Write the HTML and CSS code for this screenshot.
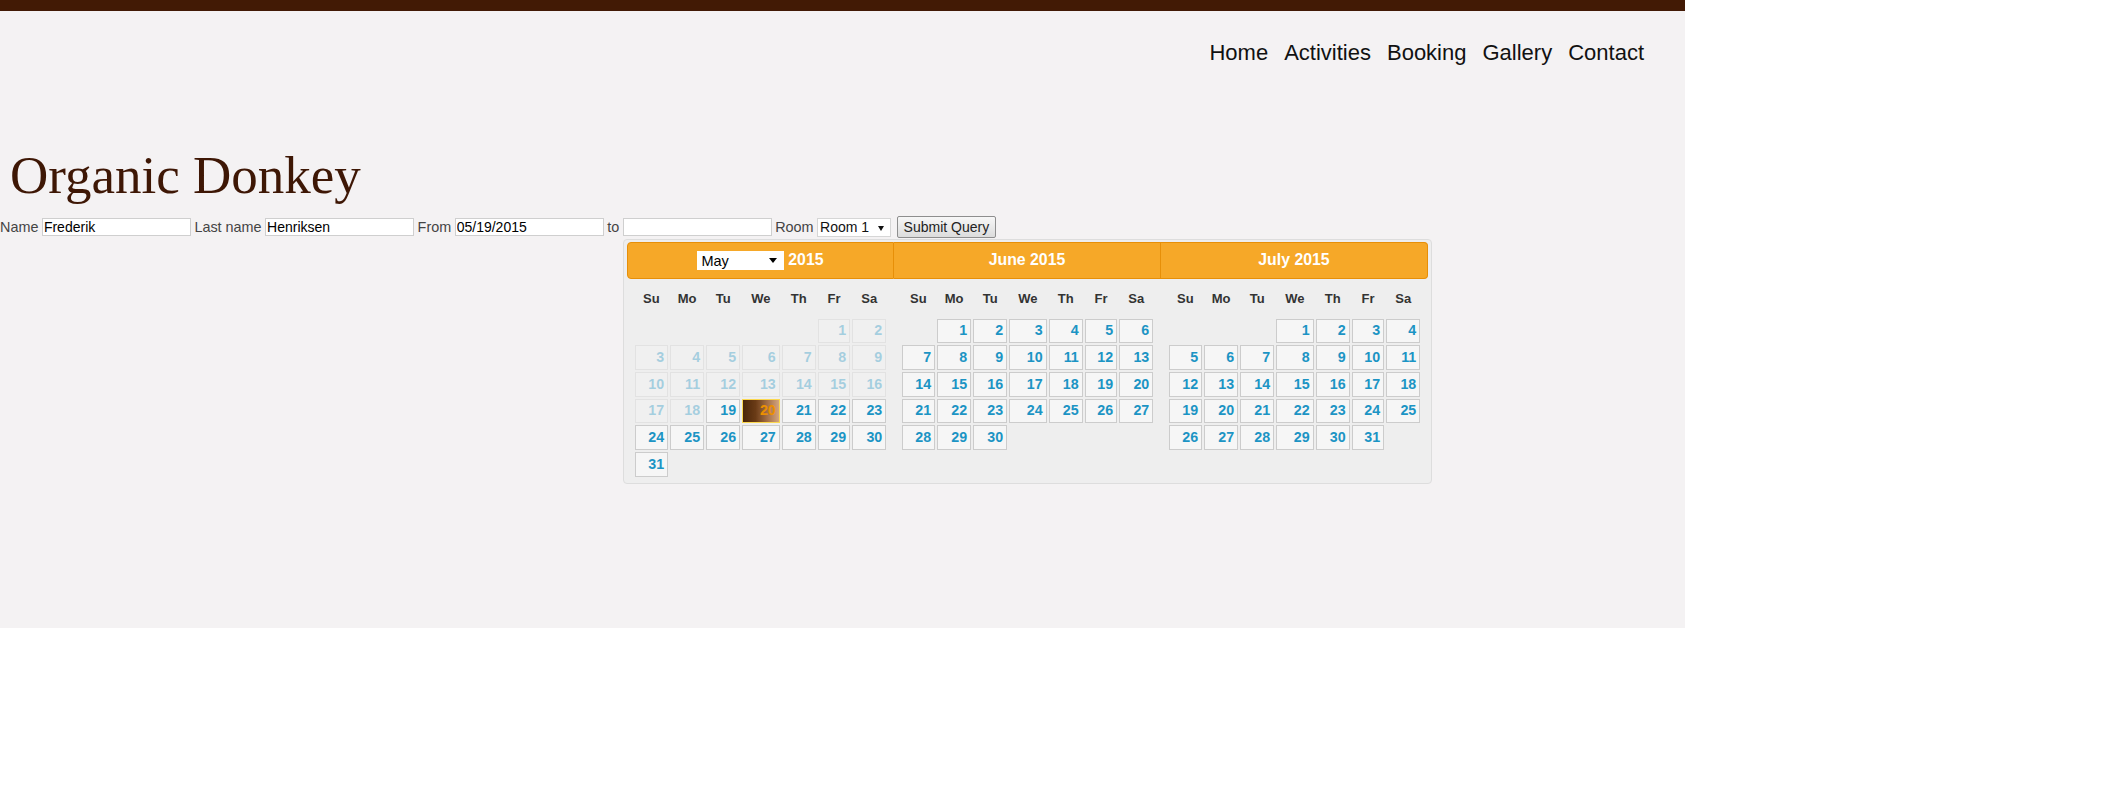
FILE: index.html
```html
<!DOCTYPE html>
<html lang="en">
<head>
<meta charset="utf-8">
<title>Organic Donkey - Booking</title>
<link rel="stylesheet" href="styles.css">
</head>
<body>
<div class="page">
  <div class="topbar"></div>
  <nav class="nav">
    <a href="#">Home</a>
    <a href="#">Activities</a>
    <a href="#">Booking</a>
    <a href="#">Gallery</a>
    <a href="#">Contact</a>
  </nav>
  <h1 class="title">Organic Donkey</h1>
  <form class="form">
    <span class="lbl">Name</span>
    <input class="field" type="text" value="Frederik">
    <span class="lbl">Last name</span>
    <input class="field" type="text" value="Henriksen">
    <span class="lbl">From</span>
    <input class="field" type="text" value="05/19/2015">
    <span class="lbl">to</span>
    <input class="field" type="text" value="">
    <span class="lbl">Room</span>
    <span class="room"><select class="room-sel"><option>Room 1</option><option>Room 2</option></select></span>
    <button class="submit" type="button">Submit Query</button>
  </form>

  <div class="dp">
    <div class="dp-groups">
      <div class="grp grp-first">
        <div class="hd"><div class="ttl"><span class="msel"><select><option>Jan</option><option>Feb</option><option>Mar</option><option>Apr</option><option selected>May</option><option>Jun</option><option>Jul</option><option>Aug</option><option>Sep</option><option>Oct</option><option>Nov</option><option>Dec</option></select></span>2015</div></div>
        <table>
          <colgroup><col class="c1"><col class="c2"><col class="c3"><col class="c4"><col class="c5"><col class="c6"><col class="c7"></colgroup>
          <thead><tr><th>Su</th><th>Mo</th><th>Tu</th><th>We</th><th>Th</th><th>Fr</th><th>Sa</th></tr></thead>
          <tbody>
            <tr><td></td><td></td><td></td><td></td><td></td><td class="off"><span class="d">1</span></td><td class="off"><span class="d">2</span></td></tr>
            <tr><td class="off"><span class="d">3</span></td><td class="off"><span class="d">4</span></td><td class="off"><span class="d">5</span></td><td class="off"><span class="d">6</span></td><td class="off"><span class="d">7</span></td><td class="off"><span class="d">8</span></td><td class="off"><span class="d">9</span></td></tr>
            <tr><td class="off"><span class="d">10</span></td><td class="off"><span class="d">11</span></td><td class="off"><span class="d">12</span></td><td class="off"><span class="d">13</span></td><td class="off"><span class="d">14</span></td><td class="off"><span class="d">15</span></td><td class="off"><span class="d">16</span></td></tr>
            <tr><td class="off"><span class="d">17</span></td><td class="off"><span class="d">18</span></td><td><a class="d" href="#">19</a></td><td><a class="d sel" href="#">20</a></td><td><a class="d" href="#">21</a></td><td><a class="d" href="#">22</a></td><td><a class="d" href="#">23</a></td></tr>
            <tr><td><a class="d" href="#">24</a></td><td><a class="d" href="#">25</a></td><td><a class="d" href="#">26</a></td><td><a class="d" href="#">27</a></td><td><a class="d" href="#">28</a></td><td><a class="d" href="#">29</a></td><td><a class="d" href="#">30</a></td></tr>
            <tr><td><a class="d" href="#">31</a></td><td></td><td></td><td></td><td></td><td></td><td></td></tr>
          </tbody>
        </table>
      </div>
      <div class="grp grp-mid">
        <div class="hd"><div class="ttl">June 2015</div></div>
        <table>
          <colgroup><col class="c1"><col class="c2"><col class="c3"><col class="c4"><col class="c5"><col class="c6"><col class="c7"></colgroup>
          <thead><tr><th>Su</th><th>Mo</th><th>Tu</th><th>We</th><th>Th</th><th>Fr</th><th>Sa</th></tr></thead>
          <tbody>
            <tr><td></td><td><a class="d" href="#">1</a></td><td><a class="d" href="#">2</a></td><td><a class="d" href="#">3</a></td><td><a class="d" href="#">4</a></td><td><a class="d" href="#">5</a></td><td><a class="d" href="#">6</a></td></tr>
            <tr><td><a class="d" href="#">7</a></td><td><a class="d" href="#">8</a></td><td><a class="d" href="#">9</a></td><td><a class="d" href="#">10</a></td><td><a class="d" href="#">11</a></td><td><a class="d" href="#">12</a></td><td><a class="d" href="#">13</a></td></tr>
            <tr><td><a class="d" href="#">14</a></td><td><a class="d" href="#">15</a></td><td><a class="d" href="#">16</a></td><td><a class="d" href="#">17</a></td><td><a class="d" href="#">18</a></td><td><a class="d" href="#">19</a></td><td><a class="d" href="#">20</a></td></tr>
            <tr><td><a class="d" href="#">21</a></td><td><a class="d" href="#">22</a></td><td><a class="d" href="#">23</a></td><td><a class="d" href="#">24</a></td><td><a class="d" href="#">25</a></td><td><a class="d" href="#">26</a></td><td><a class="d" href="#">27</a></td></tr>
            <tr><td><a class="d" href="#">28</a></td><td><a class="d" href="#">29</a></td><td><a class="d" href="#">30</a></td><td></td><td></td><td></td><td></td></tr>
          </tbody>
        </table>
      </div>
      <div class="grp grp-last">
        <div class="hd"><div class="ttl">July 2015</div></div>
        <table>
          <colgroup><col class="c1"><col class="c2"><col class="c3"><col class="c4"><col class="c5"><col class="c6"><col class="c7"></colgroup>
          <thead><tr><th>Su</th><th>Mo</th><th>Tu</th><th>We</th><th>Th</th><th>Fr</th><th>Sa</th></tr></thead>
          <tbody>
            <tr><td></td><td></td><td></td><td><a class="d" href="#">1</a></td><td><a class="d" href="#">2</a></td><td><a class="d" href="#">3</a></td><td><a class="d" href="#">4</a></td></tr>
            <tr><td><a class="d" href="#">5</a></td><td><a class="d" href="#">6</a></td><td><a class="d" href="#">7</a></td><td><a class="d" href="#">8</a></td><td><a class="d" href="#">9</a></td><td><a class="d" href="#">10</a></td><td><a class="d" href="#">11</a></td></tr>
            <tr><td><a class="d" href="#">12</a></td><td><a class="d" href="#">13</a></td><td><a class="d" href="#">14</a></td><td><a class="d" href="#">15</a></td><td><a class="d" href="#">16</a></td><td><a class="d" href="#">17</a></td><td><a class="d" href="#">18</a></td></tr>
            <tr><td><a class="d" href="#">19</a></td><td><a class="d" href="#">20</a></td><td><a class="d" href="#">21</a></td><td><a class="d" href="#">22</a></td><td><a class="d" href="#">23</a></td><td><a class="d" href="#">24</a></td><td><a class="d" href="#">25</a></td></tr>
            <tr><td><a class="d" href="#">26</a></td><td><a class="d" href="#">27</a></td><td><a class="d" href="#">28</a></td><td><a class="d" href="#">29</a></td><td><a class="d" href="#">30</a></td><td><a class="d" href="#">31</a></td><td></td></tr>
          </tbody>
        </table>
      </div>
    </div>
  </div>
</div>
</body>
</html>
```

FILE: styles.css
```css
html, body {
  margin: 0;
  padding: 0;
  background: #ffffff;
}

body {
  font-family: "Liberation Sans", Arial, sans-serif;
  font-size: 14.4px;
  color: #444;
}

.page {
  position: relative;
  width: 1685px;
  height: 628px;
  background: #f4f2f3;
}

.topbar {
  height: 11px;
  background: #421a05;
}

.nav {
  display: flex;
  justify-content: flex-end;
  gap: 16px;
  padding: 30px 41px 0 0;
  font-size: 22px;
  line-height: 24px;
}

.nav a {
  color: #111;
  text-decoration: none;
}

.title {
  margin: 80px 0 0 10px;
  font-family: "Liberation Serif", "Times New Roman", serif;
  font-weight: normal;
  font-size: 53px;
  line-height: 60px;
  color: #3e1705;
}

.form {
  display: flex;
  align-items: center;
  gap: 3.5px;
  height: 22px;
  margin: 11px 0 0 0;
}

.lbl {
  color: #444;
  font-size: 14.4px;
  line-height: 18px;
}

.field {
  box-sizing: border-box;
  width: 149px;
  height: 18px;
  margin: 0;
  padding: 0 1px;
  border: 1px solid #cfcfcf;
  background: #fff;
  font-family: "Liberation Sans", Arial, sans-serif;
  font-size: 14px;
  color: #000;
  outline: none;
}

.room {
  position: relative;
  display: inline-block;
  box-sizing: border-box;
  width: 74px;
  height: 19px;
  border: 1px solid #d6d6d6;
  background: #fff;
}

.room-sel {
  appearance: none;
  -webkit-appearance: none;
  width: 100%;
  height: 17px;
  margin: 0;
  padding: 0 0 0 2px;
  border: 0;
  background: transparent;
  font-family: "Liberation Sans", Arial, sans-serif;
  font-size: 14px;
  line-height: 17px;
  color: #111;
  outline: none;
}

.room::after {
  content: "";
  position: absolute;
  right: 6px;
  top: 7px;
  border-top: 5px solid #111;
  border-left: 3.5px solid transparent;
  border-right: 3.5px solid transparent;
  pointer-events: none;
}

.submit {
  box-sizing: border-box;
  height: 22px;
  margin: 0 0 0 2px;
  padding: 0 6px;
  border: 1px solid #8e8e8e;
  border-radius: 2px;
  background: linear-gradient(#f7f7f7, #dcdcdc);
  font-family: "Liberation Sans", Arial, sans-serif;
  font-size: 14px;
  color: #222;
}

/* Datepicker popup (overlays the page under the "to" field) */
.dp {
  position: absolute;
  left: 623px;
  top: 239px;
  width: 801px;
  padding: 2px 3px 0;
  border: 1px solid #dddddd;
  border-radius: 4px;
  background: #eeeeee;
  font-family: "Liberation Sans", Arial, sans-serif;
  font-size: 15.84px;
  color: #333;
}

.dp-groups {
  display: flex;
}

.grp {
  width: 33.333%;
}

.hd {
  padding: 3px 0;
  border: 1px solid #e78f08;
  background: #f6a828;
  color: #fff;
  font-weight: bold;
}

.grp-first .hd {
  border-radius: 4px 0 0 4px;
}

.grp-mid .hd,
.grp-last .hd {
  border-left-width: 0;
}

.grp-last .hd {
  border-radius: 0 4px 4px 0;
}

.ttl {
  margin: 0 36px;
  line-height: 28.5px;
  text-align: center;
  white-space: nowrap;
}

.msel {
  position: relative;
  display: inline-block;
  width: 45%;
  height: 19px;
  margin-right: 4px;
  vertical-align: middle;
  background: #fff;
  text-align: left;
}

.msel select {
  appearance: none;
  -webkit-appearance: none;
  display: block;
  width: 100%;
  height: 19px;
  margin: 0;
  padding: 0 0 0 4px;
  border: 0;
  background: transparent;
  font-family: "Liberation Sans", Arial, sans-serif;
  font-size: 14.5px;
  color: #000;
  outline: none;
}

.msel::after {
  content: "";
  position: absolute;
  right: 7px;
  top: 7px;
  border-top: 5px solid #000;
  border-left: 4px solid transparent;
  border-right: 4px solid transparent;
  pointer-events: none;
}

.grp table {
  width: 95%;
  margin: 0 auto 5.7px;
  border-collapse: collapse;
  table-layout: fixed;
  font-size: 14.26px;
}

.c1 { width: 14%; }
.c2 { width: 14.2%; }
.c3 { width: 14.2%; }
.c4 { width: 15.6%; }
.c5 { width: 14.2%; }
.c6 { width: 13.6%; }
.c7 { width: 14.2%; }

.grp th {
  padding: 10px 0;
  line-height: 19px;
  text-align: center;
  font-weight: bold;
  font-size: 13px;
  color: #333;
}

.grp td {
  padding: 1px;
  border: 0;
}

.d {
  display: block;
  padding: 2.85px 3px;
  border: 1px solid #cccccc;
  background: #f6f6f6;
  color: #1c94c4;
  font-weight: bold;
  line-height: 17px;
  text-align: right;
  text-decoration: none;
}

.off {
  opacity: 0.35;
}

.d.sel {
  border-color: #fbd850;
  background: linear-gradient(90deg, #4a2609 0%, #6a3b16 35%, #a8734a 70%, #d3a57f 100%);
  color: #eb8f00;
}
```
